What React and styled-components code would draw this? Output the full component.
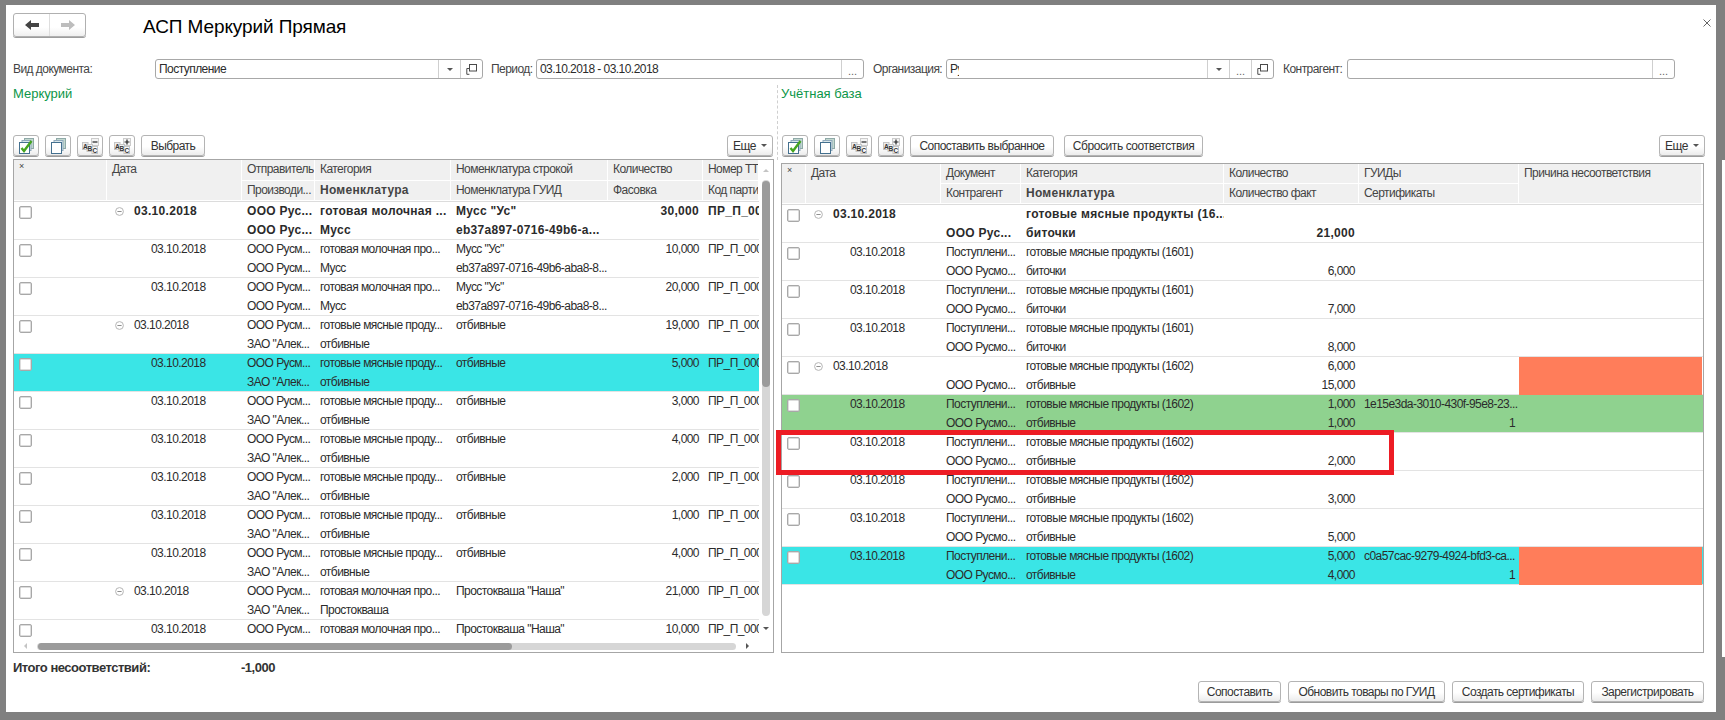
import React from 'react';
import styled, { createGlobalStyle } from 'styled-components';

const LEFT_COLS = '93px 135px 73px 136px 157px 95px 56px';
const RIGHT_COLS = '24px 135px 80px 203px 135px 160px 183px';

const TEAL = '#3ae5e6';
const GREEN = '#8fd28f';
const CORAL = '#ff7d5a';

const GlobalStyle = createGlobalStyle`
  html, body {
    margin: 0;
    padding: 0;
    background: #808080;
  }
  body {
    font-family: "Liberation Sans", Arial, sans-serif;
    font-size: 12px;
    letter-spacing: -0.55px;
    color: #2b2b2b;
  }
`;

const Page = styled.div`
  position: relative;
  box-sizing: border-box;
  width: 1725px;
  height: 720px;
  padding: 5px 9px 8px 6px;
  overflow: hidden;
`;
const EdgeStrip = styled.div`
  position: absolute;
  top: 160px;
  right: 0;
  width: 3px;
  height: 497px;
  background: #fff;
`;
const Sheet = styled.div`
  box-sizing: border-box;
  height: 100%;
  background: #fff;
  padding: 8px 0 0 7px;
`;
const TitleBar = styled.div`
  display: flex;
  height: 24px;
`;
const NavGroup = styled.div`
  display: flex;
  box-sizing: border-box;
  width: 73px;
  height: 24px;
  border: 1px solid #b0b0b0;
  border-radius: 3px;
  box-shadow: 0 1px 0 #9c9c9c;
  background: linear-gradient(#fff 60%, #efefef);
`;
const NavButton = styled.div`
  display: flex;
  align-items: center;
  justify-content: center;
  flex: 1;
  & + & {
    border-left: 1px solid #dedede;
  }
`;
const Title = styled.h1`
  margin: 0 0 0 57px;
  font-size: 19px;
  font-weight: normal;
  line-height: 28px;
  letter-spacing: -0.1px;
  color: #000;
`;
const CloseButton = styled.div`
  margin: 6px 5px 0 auto;
  display: flex;
  padding-right: 0;
`;
const Filters = styled.div`
  display: flex;
  align-items: center;
  margin-top: 22px;
  height: 20px;
`;
const FilterLabel = styled.div`
  width: ${(p) => p.$w}px;
  margin-left: ${(p) => p.$gap || 0}px;
  white-space: nowrap;
  color: #444;
`;
const Field = styled.div`
  display: flex;
  box-sizing: border-box;
  width: 328px;
  height: 20px;
  border: 1px solid #a8a8a8;
  border-radius: 3px;
`;
const FieldText = styled.div`
  flex: ${(p) => (p.$clip ? 'none' : 1)};
  width: ${(p) => (p.$clip ? `${p.$clip}px` : 'auto')};
  margin-left: 3px;
  line-height: 18px;
  overflow: hidden;
  white-space: nowrap;
`;
const FieldFill = styled.div`
  flex: 1;
`;
const FieldButton = styled.div`
  display: flex;
  align-items: center;
  justify-content: center;
  width: 21px;
  border-left: 1px solid #cfcfcf;
  color: #666;
  font-size: 11px;
  line-height: 18px;
`;
const Dots = styled.span`
  padding-top: 3px;
  letter-spacing: 0;
`;
const Caret = styled.span`
  width: 0;
  height: 0;
  border-left: 3px solid transparent;
  border-right: 3px solid transparent;
  border-top: 3px solid #555;
`;
const Main = styled.div`
  display: flex;
  margin-top: 6px;
`;
const Panel = styled.div`
  display: flex;
  flex-direction: column;
  width: ${(p) => p.$w}px;
`;
const Divider = styled.div`
  align-self: flex-start;
  margin: 0 3px;
  height: 75px;
  border-left: 1px dashed #cfcfcf;
`;
const PanelTitle = styled.div`
  height: 18px;
  font-size: 13px;
  line-height: 18px;
  letter-spacing: 0;
  color: #0c9648;
`;
const Toolbar = styled.div`
  display: flex;
  gap: 6px;
  margin-top: 32px;
  height: 21px;
  padding-left: ${(p) => p.$inset || 0}px;
  padding-right: ${(p) => p.$endInset || 0}px;
`;
const Button = styled.div`
  display: flex;
  align-items: center;
  justify-content: center;
  box-sizing: border-box;
  flex: none;
  width: ${(p) => p.$w || 26}px;
  height: 21px;
  margin-left: ${(p) => p.$ml || 0};
  border: 1px solid #b4b4b4;
  border-radius: 3px;
  background: linear-gradient(#fff 55%, #ececec);
  box-shadow: 0 1px 0 #9c9c9c;
  color: #333;
  white-space: nowrap;
`;
const WideLabel = styled.span`
  letter-spacing: -0.42px;
`;
const MoreCaret = styled(Caret)`
  margin-left: 5px;
`;
const Table = styled.div`
  display: flex;
  flex-direction: column;
  box-sizing: border-box;
  margin-top: ${(p) => p.$top}px;
  height: ${(p) => p.$h}px;
  width: ${(p) => p.$w}px;
  border: 1px solid #a6a6a6;
`;
const TableMiddle = styled.div`
  display: flex;
  flex: 1;
  min-height: 0;
`;
const TableGrid = styled.div`
  flex: 1;
  min-width: 0;
  overflow: ${(p) => (p.$clip ? 'hidden' : 'visible')};
`;
const HeadGrid = styled.div`
  display: grid;
  grid-template-columns: ${(p) => p.$cols};
  grid-template-rows: ${(p) => p.$rows};
  border-bottom: 1px solid #dcdcdc;
`;
const HeadCell = styled.div`
  grid-row: ${(p) => (p.$tall ? 'span 2' : 'auto')};
  padding-left: 5px;
  background: #f0f0f0;
  border-right: 1px solid #fff;
  border-bottom: 1px solid #fff;
  line-height: 19px;
  white-space: nowrap;
  overflow: hidden;
  color: #444;
  font-weight: ${(p) => (p.$bold ? 'bold' : 'normal')};
  letter-spacing: ${(p) => (p.$bold ? '0.25px' : 'inherit')};
`;
const MarkCell = styled(HeadCell)`
  font-size: 9px;
  line-height: 13px;
  letter-spacing: 0;
`;
const Row = styled.div`
  position: relative;
  display: grid;
  grid-template-columns: ${(p) => p.$cols};
  box-sizing: border-box;
  height: 38px;
  border-bottom: 1px solid #e3e3e3;
  background: ${(p) => p.$bg || 'transparent'};
  font-weight: ${(p) => (p.$bold ? 'bold' : 'normal')};
  letter-spacing: ${(p) => (p.$bold ? '0.3px' : 'inherit')};
`;
const CheckCell = styled.div`
  padding: 4px 0 0 5px;
`;
const CheckBox = styled.div`
  box-sizing: border-box;
  width: 13px;
  height: 13px;
  border: 1px solid #a8a8a8;
  border-radius: 2px;
  background: #fff;
  box-shadow: inset 0 0 0 0.5px #bbb;
`;
const DateCell = styled.div`
  display: flex;
  align-items: center;
  gap: 10px;
  height: 19px;
  line-height: 19px;
  padding-left: ${(p) => (p.$group ? 8 : 44)}px;
`;
const Stack = styled.div`
  min-width: 0;
  background: ${(p) => p.$bg || 'transparent'};
`;
const Line = styled.div`
  height: 19px;
  line-height: 19px;
  padding: ${(p) => (p.$flush ? '0 0 0 5px' : '0 4px 0 5px')};
  text-align: ${(p) => (p.$right ? 'right' : 'left')};
  white-space: nowrap;
  overflow: hidden;
`;
const VScroll = styled.div`
  display: flex;
  flex-direction: column;
  align-items: center;
  width: 14px;
  flex: none;
`;
const ArrowSlot = styled.div`
  display: flex;
  align-items: center;
  justify-content: center;
  flex: none;
  height: ${(p) => p.$h || 'auto'};
  width: ${(p) => p.$w || 'auto'};
`;
const VTrack = styled.div`
  flex: 1;
  width: 8px;
  border-radius: 4px;
  background: #d6d6d6;
`;
const VThumb = styled.div`
  height: 206px;
  margin-top: 1px;
  border-radius: 4px;
  background: #9b9b9b;
`;
const HScroll = styled.div`
  display: flex;
  align-items: center;
  flex: none;
  height: 12px;
  padding-right: 14px;
`;
const HTrack = styled.div`
  flex: 1;
  height: 7px;
  border-radius: 4px;
  background: #d6d6d6;
`;
const HThumb = styled.div`
  width: 474px;
  height: 7px;
  margin-left: 1px;
  border-radius: 4px;
  background: #9b9b9b;
`;
const Triangle = styled.span`
  width: 0;
  height: 0;
  border: 3.5px solid transparent;
  ${(p) => `border-${p.$dir}-color: ${p.$color};`}
  ${(p) => `border-${{ bottom: 'top', top: 'bottom', left: 'right', right: 'left' }[p.$dir]}-width: 0;`}
`;
const Highlight = styled.div`
  position: absolute;
  z-index: 2;
  top: -3px;
  left: -6px;
  box-sizing: border-box;
  width: 618px;
  height: 45px;
  border: 5px solid #ed1c24;
  pointer-events: none;
`;
const Total = styled.div`
  display: flex;
  margin-top: 6px;
  height: 18px;
  font-size: 13px;
  line-height: 18px;
  font-weight: bold;
  letter-spacing: -0.48px;
  color: #333;
`;
const TotalLabel = styled.div`
  width: 228px;
`;
const Actions = styled.div`
  display: flex;
  justify-content: flex-end;
  gap: 7px;
  margin-top: 4px;
  padding-right: 12px;
`;

const MinusCircle = () => (
  <svg width="9" height="9" viewBox="0 0 9 9">
    <circle cx="4.5" cy="4.5" r="3.9" fill="none" stroke="#b5b5b5" />
    <path d="M2.4 4.5h4.2" stroke="#8f8f8f" />
  </svg>
);

const StackIcon = ({ checked }) => (
  <svg width="17" height="16" viewBox="0 0 17 16">
    <rect x="6.5" y="0.5" width="9" height="10" fill="#c2d8cf" stroke="#8fa9a8" />
    <rect x="4" y="2.5" width="9" height="10" fill="#d8e6ea" stroke="#8fa9bc" />
    <rect x="1.5" y="4.5" width="10" height="11" fill="#fff" stroke="#44708f" />
    {checked && <path d="M3.5 10l2.5 3 7.5-10" fill="none" stroke="#45a51f" strokeWidth="2.4" />}
  </svg>
);

const AbcIcon = ({ plus }) => (
  <svg width="17" height="16" viewBox="0 0 17 16" fontFamily="Liberation Sans" fontWeight="bold" fontSize="6.5" letterSpacing="0">
    <rect x="9.5" y="0.5" width="7" height="7" fill="#f4f4f4" stroke="#ccc" />
    <rect x="0.5" y="4.5" width="5.5" height="7" fill="#ececec" stroke="#c4c4c4" />
    <rect x="5" y="6.5" width="5.5" height="7" fill="#f2f2f2" stroke="#c4c4c4" />
    <rect x="10" y="8.5" width="5.5" height="7" fill="#fafafa" stroke="#c4c4c4" />
    <text x="1" y="10.5" fill="#333">A</text>
    <text x="5.5" y="12.5" fill="#333">B</text>
    <text x="10.5" y="14.5" fill="#333">C</text>
    <path d={plus ? 'M10.5 4h5M13 1.5v5' : 'M10.5 4h5'} stroke="#222" strokeWidth="1.2" />
  </svg>
);

const OpenIcon = () => (
  <svg width="11" height="11" viewBox="0 0 11 11">
    <rect x="3.5" y="0.5" width="7" height="6.5" fill="none" stroke="#4a4a4a" />
    <path d="M3.5 4.5H.8v5.8M.8 10.3h2.6" fill="none" stroke="#4a4a4a" />
  </svg>
);

const NavArrow = ({ forward }) => (
  <svg width="14" height="10" viewBox="0 0 14 10">
    <path
      d={forward ? 'M14 5L8 0v3H0v4h8v3z' : 'M0 5l6-5v3h8v4H6v3z'}
      fill={forward ? '#bdbdbd' : '#444'}
    />
  </svg>
);

const CloseIcon = () => (
  <svg width="8" height="8" viewBox="0 0 8 8">
    <path d="M.5.5l7 7M7.5.5l-7 7" stroke="#666" />
  </svg>
);

const ToolIcons = () => (
  <>
    <Button><StackIcon checked /></Button>
    <Button><StackIcon /></Button>
    <Button><AbcIcon /></Button>
    <Button><AbcIcon plus /></Button>
  </>
);

const DATE = '03.10.2018';
const MEAT = 'готовые мясные проду...';
const MILK = 'готовая молочная про...';
const RUSM = 'ООО Русм...';
const ALEK = 'ЗАО "Алек...';
const GUID = 'eb37a897-0716-49b6-aba8-8...';
const PARTY = 'ПР_П_000001';

const leftRows = [
  { group: true, bold: true, from: ['ООО Рус...', 'ООО Рус...'], cat: ['готовая молочная ...', 'Мусс'], name: ['Мусс "Ус"', 'eb37a897-0716-49b6-a...'], qty: '30,000' },
  { from: [RUSM, RUSM], cat: [MILK, 'Мусс'], name: ['Мусс "Ус"', GUID], qty: '10,000' },
  { from: [RUSM, RUSM], cat: [MILK, 'Мусс'], name: ['Мусс "Ус"', GUID], qty: '20,000' },
  { group: true, from: [RUSM, ALEK], cat: [MEAT, 'отбивные'], name: ['отбивные', ''], qty: '19,000' },
  { bg: TEAL, from: [RUSM, ALEK], cat: [MEAT, 'отбивные'], name: ['отбивные', ''], qty: '5,000' },
  { from: [RUSM, ALEK], cat: [MEAT, 'отбивные'], name: ['отбивные', ''], qty: '3,000' },
  { from: [RUSM, ALEK], cat: [MEAT, 'отбивные'], name: ['отбивные', ''], qty: '4,000' },
  { from: [RUSM, ALEK], cat: [MEAT, 'отбивные'], name: ['отбивные', ''], qty: '2,000' },
  { from: [RUSM, ALEK], cat: [MEAT, 'отбивные'], name: ['отбивные', ''], qty: '1,000' },
  { from: [RUSM, ALEK], cat: [MEAT, 'отбивные'], name: ['отбивные', ''], qty: '4,000' },
  { group: true, from: [RUSM, ALEK], cat: [MILK, 'Простокваша'], name: ['Простокваша "Наша"', ''], qty: '21,000' },
  { from: [RUSM, ALEK], cat: [MILK, 'Простокваша'], name: ['Простокваша "Наша"', ''], qty: '10,000' },
];

const CAT_1601 = 'готовые мясные продукты (1601)';
const CAT_1602 = 'готовые мясные продукты (1602)';
const INCOME = 'Поступлени...';
const RUSMO = 'ООО Русмо...';

const rightRows = [
  { group: true, bold: true, doc: ['', 'ООО Рус...'], cat: ['готовые мясные продукты (16...', 'биточки'], qty: ['', '21,000'] },
  { doc: [INCOME, RUSMO], cat: [CAT_1601, 'биточки'], qty: ['', '6,000'] },
  { doc: [INCOME, RUSMO], cat: [CAT_1601, 'биточки'], qty: ['', '7,000'] },
  { doc: [INCOME, RUSMO], cat: [CAT_1601, 'биточки'], qty: ['', '8,000'] },
  { group: true, doc: ['', RUSMO], cat: [CAT_1602, 'отбивные'], qty: ['6,000', '15,000'], reason: CORAL },
  { bg: GREEN, doc: [INCOME, RUSMO], cat: [CAT_1602, 'отбивные'], qty: ['1,000', '1,000'], guid: '1e15e3da-3010-430f-95e8-23...', certs: '1' },
  { marked: true, doc: [INCOME, RUSMO], cat: [CAT_1602, 'отбивные'], qty: ['', '2,000'] },
  { doc: [INCOME, RUSMO], cat: [CAT_1602, 'отбивные'], qty: ['', '3,000'] },
  { doc: [INCOME, RUSMO], cat: [CAT_1602, 'отбивные'], qty: ['', '5,000'] },
  { bg: TEAL, doc: [INCOME, RUSMO], cat: [CAT_1602, 'отбивные'], qty: ['5,000', '4,000'], guid: 'c0a57cac-9279-4924-bfd3-ca...', certs: '1', reason: CORAL },
];

const Pair = ({ lines }) => (
  <Stack>
    <Line>{lines[0]}</Line>
    <Line>{lines[1]}</Line>
  </Stack>
);

const RowStart = ({ group }) => (
  <>
    <CheckCell><CheckBox /></CheckCell>
    <DateCell $group={group}>
      {group && <MinusCircle />}
      {DATE}
    </DateCell>
  </>
);

const LeftRow = ({ row }) => (
  <Row $cols={LEFT_COLS} $bg={row.bg} $bold={row.bold}>
    <RowStart group={row.group} />
    <Pair lines={row.from} />
    <Pair lines={row.cat} />
    <Pair lines={row.name} />
    <Stack><Line $right>{row.qty}</Line></Stack>
    <Stack><Line $flush>{PARTY}</Line></Stack>
  </Row>
);

const RightRow = ({ row }) => (
  <Row $cols={RIGHT_COLS} $bg={row.bg} $bold={row.bold}>
    <RowStart group={row.group} />
    <Pair lines={row.doc} />
    <Pair lines={row.cat} />
    <Stack>
      <Line $right>{row.qty[0]}</Line>
      <Line $right>{row.qty[1]}</Line>
    </Stack>
    <Stack>
      <Line>{row.guid}</Line>
      <Line $right>{row.certs}</Line>
    </Stack>
    <Stack $bg={row.reason} />
    {row.marked && <Highlight />}
  </Row>
);

export default function App() {
  return (
    <Page>
      <GlobalStyle />
      <EdgeStrip />
      <Sheet>
        <TitleBar>
          <NavGroup>
            <NavButton><NavArrow /></NavButton>
            <NavButton><NavArrow forward /></NavButton>
          </NavGroup>
          <Title>АСП Меркурий Прямая</Title>
          <CloseButton><CloseIcon /></CloseButton>
        </TitleBar>

        <Filters>
          <FilterLabel $w={142}>Вид документа:</FilterLabel>
          <Field>
            <FieldText>Поступление</FieldText>
            <FieldButton><Caret /></FieldButton>
            <FieldButton><OpenIcon /></FieldButton>
          </Field>
          <FilterLabel $w={45} $gap={8}>Период:</FilterLabel>
          <Field>
            <FieldText>03.10.2018 - 03.10.2018</FieldText>
            <FieldButton><Dots>...</Dots></FieldButton>
          </Field>
          <FilterLabel $w={73} $gap={9}>Организация:</FilterLabel>
          <Field>
            <FieldText $clip={9}>Рус</FieldText>
            <FieldFill />
            <FieldButton><Caret /></FieldButton>
            <FieldButton><Dots>...</Dots></FieldButton>
            <FieldButton><OpenIcon /></FieldButton>
          </Field>
          <FilterLabel $w={64} $gap={9}>Контрагент:</FilterLabel>
          <Field>
            <FieldText />
            <FieldButton><Dots>...</Dots></FieldButton>
          </Field>
        </Filters>

        <Main>
          <Panel $w={761}>
            <PanelTitle>Меркурий</PanelTitle>
            <Toolbar $endInset={1}>
              <ToolIcons />
              <Button $w={64}>Выбрать</Button>
              <Button $w={46} $ml="auto">Еще<MoreCaret /></Button>
            </Toolbar>
            <Table $top={3} $h={494} $w={761}>
              <TableMiddle>
                <TableGrid $clip>
                  <HeadGrid $cols={LEFT_COLS} $rows="21px 20px">
                    <MarkCell $tall>×</MarkCell>
                    <HeadCell $tall>Дата</HeadCell>
                    <HeadCell>Отправитель</HeadCell>
                    <HeadCell>Категория</HeadCell>
                    <HeadCell>Номенклатура строкой</HeadCell>
                    <HeadCell>Количество</HeadCell>
                    <HeadCell>Номер ТТ</HeadCell>
                    <HeadCell>Производи...</HeadCell>
                    <HeadCell $bold>Номенклатура</HeadCell>
                    <HeadCell>Номенклатура ГУИД</HeadCell>
                    <HeadCell>Фасовка</HeadCell>
                    <HeadCell>Код партии</HeadCell>
                  </HeadGrid>
                  {leftRows.map((row, i) => (
                    <LeftRow key={i} row={row} />
                  ))}
                </TableGrid>
                <VScroll>
                  <ArrowSlot $h="20px"><Triangle $dir="bottom" $color="#c4c4c4" /></ArrowSlot>
                  <VTrack><VThumb /></VTrack>
                  <ArrowSlot $h="24px"><Triangle $dir="top" $color="#555" /></ArrowSlot>
                </VScroll>
              </TableMiddle>
              <HScroll>
                <ArrowSlot $w="23px"><Triangle $dir="right" $color="#c4c4c4" /></ArrowSlot>
                <HTrack><HThumb /></HTrack>
                <ArrowSlot $w="23px"><Triangle $dir="left" $color="#555" /></ArrowSlot>
              </HScroll>
            </Table>
            <Total>
              <TotalLabel>Итого несоответствий:</TotalLabel>
              -1,000
            </Total>
          </Panel>

          <Divider />

          <Panel $w={924}>
            <PanelTitle>Учётная база</PanelTitle>
            <Toolbar $inset={1}>
              <ToolIcons />
              <Button $w={144}>Сопоставить выбранное</Button>
              <Button $w={139} $ml="4px"><WideLabel>Сбросить соответствия</WideLabel></Button>
              <Button $w={46} $ml="auto">Еще<MoreCaret /></Button>
            </Toolbar>
            <Table $top={7} $h={490} $w={923}>
              <TableGrid>
                <HeadGrid $cols={RIGHT_COLS} $rows="20px 20px">
                  <MarkCell $tall>×</MarkCell>
                  <HeadCell $tall>Дата</HeadCell>
                  <HeadCell>Документ</HeadCell>
                  <HeadCell>Категория</HeadCell>
                  <HeadCell>Количество</HeadCell>
                  <HeadCell>ГУИДы</HeadCell>
                  <HeadCell $tall>Причина несоответствия</HeadCell>
                  <HeadCell>Контрагент</HeadCell>
                  <HeadCell $bold>Номенклатура</HeadCell>
                  <HeadCell>Количество факт</HeadCell>
                  <HeadCell>Сертификаты</HeadCell>
                </HeadGrid>
                {rightRows.map((row, i) => (
                  <RightRow key={i} row={row} />
                ))}
              </TableGrid>
            </Table>
          </Panel>
        </Main>

        <Actions>
          <Button $w={83}>Сопоставить</Button>
          <Button $w={157}>Обновить товары по ГУИД</Button>
          <Button $w={132}>Создать сертификаты</Button>
          <Button $w={113}>Зарегистрировать</Button>
        </Actions>
      </Sheet>
    </Page>
  );
}
